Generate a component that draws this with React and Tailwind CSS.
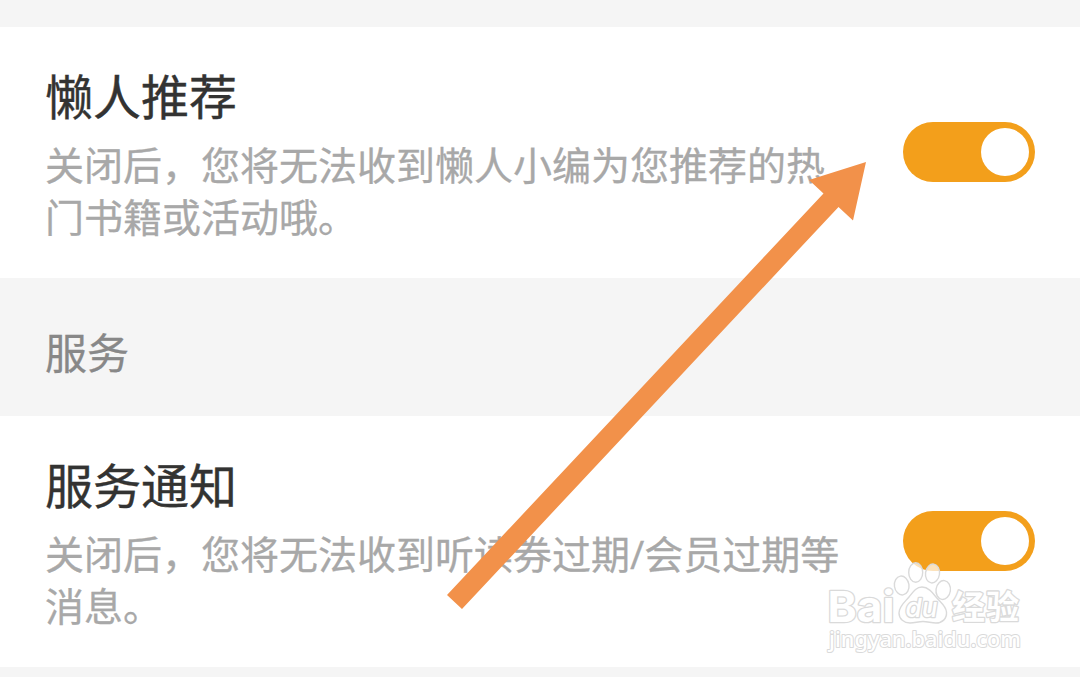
const Toggle = () => (
  <button
    type="button"
    role="switch"
    aria-checked="true"
    className="flex h-[60px] w-[132px] shrink-0 items-center justify-end rounded-full bg-[#f39f1b] pr-[6px]"
  >
    <span className="h-12 w-12 rounded-full bg-white" />
  </button>
);

const SettingRow = ({ title, lines }) => (
  <section className="flex h-[251px] justify-between bg-white px-[45px]">
    <div className="pt-[37px]">
      <h2 className="whitespace-nowrap text-[48px] leading-[60px] text-[#333332] [-webkit-text-stroke:0.4px_#333332]">
        {title}
      </h2>
      <p className="mt-[15px] whitespace-nowrap font-['Open_Sans','Noto_Sans_CJK_SC',sans-serif] text-[39px] leading-[52px] text-[#a8a8a8] [-webkit-text-stroke:0.3px_#a8a8a8]">
        {lines.map((line) => (
          <span key={line} className="block">
            {line}
          </span>
        ))}
      </p>
    </div>
    <div className="pt-[95px]">
      <Toggle />
    </div>
  </section>
);

const Arrow = () => (
  <svg
    className="pointer-events-none absolute left-0 top-0"
    width="1080"
    height="677"
    viewBox="0 0 1080 677"
  >
    <path d="M447 595L823.5 193.5L809 180L866 162L853 220.5L838.5 207L462 609Z" fill="#f2914a" />
  </svg>
);

const Watermark = () => (
  <svg
    className="pointer-events-none absolute left-[820px] top-[555px]"
    width="210"
    height="105"
    viewBox="820 555 210 105"
  >
    <g fill="#fff" stroke="#dadada" strokeWidth="1.4" strokeLinejoin="round">
      {/* paw */}
      <g fillOpacity="0.7">
        <ellipse cx="901.7" cy="585.5" rx="7.3" ry="9.5" transform="rotate(-8 901.7 585.5)" />
        <ellipse cx="915.7" cy="572.5" rx="7" ry="9.7" />
        <ellipse cx="932.5" cy="573.5" rx="7" ry="9.5" transform="rotate(8 932.5 573.5)" />
        <ellipse cx="943.2" cy="590" rx="7.2" ry="9.5" transform="rotate(8 943.2 590)" />
      </g>
      <path d="M922 587C916 587 913 592 909 597C905 602 899 606 899 613C899 619 904 623 910 623C915 623 918 621.500 923 621.500C928 621.500 931 623 936 623C942 623 947 619 946.500 612C946 606 940 602 936 597C932 592 928 587 922 587Z" />

      <g strokeWidth="2.6" paintOrder="stroke">
        <text
          x="827.5"
          y="621.5"
          className="font-[Inter,sans-serif] text-[43px] font-bold"
          textLength="67"
          lengthAdjust="spacingAndGlyphs"
        >
          Bai
        </text>
        <text
          x="905.5"
          y="617"
          className="font-[Inter,sans-serif] text-[26px] font-medium italic"
          textLength="32"
          lengthAdjust="spacingAndGlyphs"
        >
          du
        </text>
        <text
          x="952"
          y="618.5"
          className="font-['Noto_Sans_CJK_SC',sans-serif] text-[33px] font-bold"
          textLength="67"
        >
          经验
        </text>
        <text
          x="829"
          y="647"
          className="font-['Noto_Sans',sans-serif] text-[21.5px] font-medium"
          strokeWidth="2"
          textLength="192"
          lengthAdjust="spacingAndGlyphs"
        >
          jingyan.baidu.com
        </text>
      </g>
    </g>
  </svg>
);

export default function App() {
  return (
    <main className="relative h-[677px] w-[1080px] overflow-hidden bg-[#f5f5f5] pt-[27px] font-['Noto_Sans_CJK_SC',sans-serif]">
      <SettingRow
        title="懒人推荐"
        lines={["关闭后，您将无法收到懒人小编为您推荐的热", "门书籍或活动哦。"]}
      />
      <div className="flex h-[138px] items-center pl-[45px] pt-2 text-[42px] leading-[60px] text-[#888] [-webkit-text-stroke:0.3px_#888]">
        服务
      </div>
      <SettingRow
        title="服务通知"
        lines={["关闭后，您将无法收到听读券过期/会员过期等", "消息。"]}
      />
      <Arrow />
      <Watermark />
    </main>
  );
}
